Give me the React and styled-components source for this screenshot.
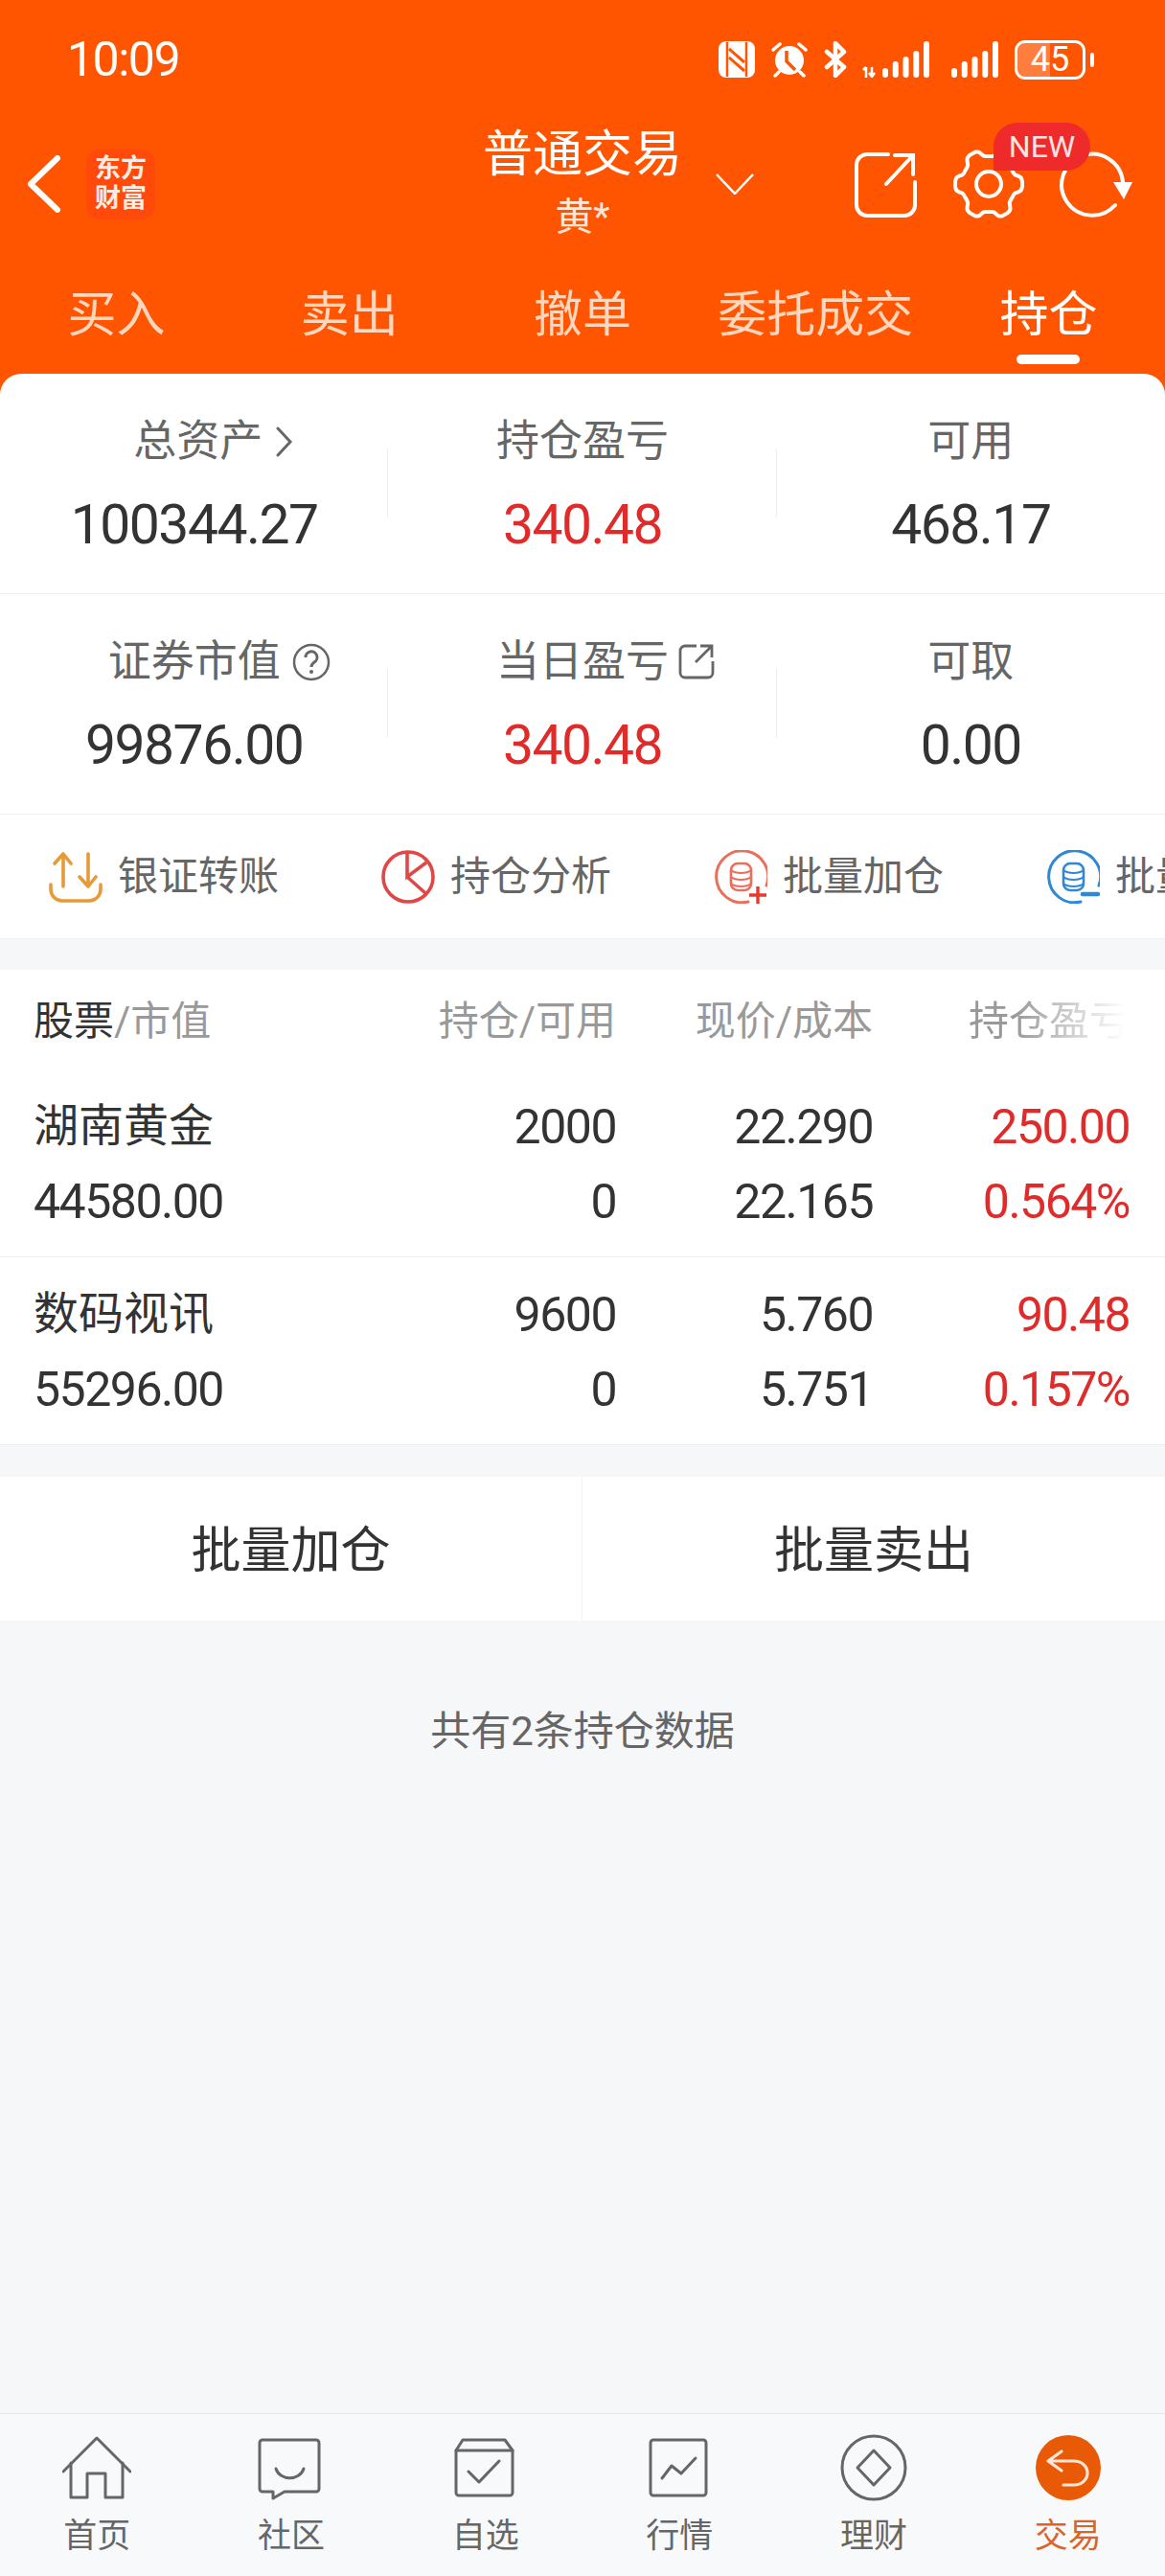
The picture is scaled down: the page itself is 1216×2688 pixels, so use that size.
import React from 'react'
import styled, { createGlobalStyle } from 'styled-components'

const GlobalStyle = createGlobalStyle`
  html, body {
    margin: 0;
    padding: 0;
    background: #F6F7F9;
  }
  * {
    box-sizing: border-box;
  }
  body {
    font-family: Roboto, "Noto Sans CJK SC", sans-serif;
  }
`

const ORANGE = '#FF5500'
const RED = '#E02B2B'

const Page = styled.div`
  width: 1216px;
  height: 2688px;
  display: flex;
  flex-direction: column;
  overflow: hidden;
  background: #F6F7F9;
`

const Header = styled.header`
  background: ${ORANGE};
  color: #fff;
`

const StatusBar = styled.div`
  height: 124px;
  padding: 0 74px 0 70px;
  display: flex;
  align-items: center;
  justify-content: space-between;
`

const Time = styled.span`
  font-size: 50px;
  letter-spacing: -1.5px;
`

const StatusIcons = styled.div`
  display: flex;
  align-items: center;
  gap: 16px;
`

const SimSlot = styled.div`
  display: flex;
  margin-left: 7px;
`

const Battery = styled.div`
  position: relative;
  width: 74px;
  height: 41px;
  margin-right: 9px;
  border: 3px solid #fff;
  border-radius: 11px;
  background: linear-gradient(to right, rgba(255, 255, 255, 0.24) 50%, transparent 50%);
  background-clip: padding-box;
  display: flex;
  align-items: center;
  justify-content: center;
  font-size: 36px;
  line-height: 1;
  &::after {
    content: '';
    position: absolute;
    right: -12px;
    top: 10px;
    width: 4px;
    height: 15px;
    border-radius: 2px;
    background: #fff;
  }
`

const Nav = styled.nav`
  position: relative;
  height: 136px;
  display: grid;
  grid-template-columns: 1fr auto 1fr;
  align-items: center;
`

const NavLeft = styled.div`
  display: flex;
  align-items: center;
  padding-left: 28px;
`

const Logo = styled.div`
  width: 72px;
  height: 73px;
  margin-left: 26px;
  border-radius: 14px;
  background: #FF4A0C;
  color: #FFEDE3;
  font-size: 27px;
  font-weight: 700;
  line-height: 31px;
  text-align: center;
  display: flex;
  flex-direction: column;
  justify-content: center;
`

const TitleBlock = styled.div`
  text-align: center;
`

const Title = styled.div`
  font-size: 52px;
  line-height: 60px;
`

const SubTitle = styled.div`
  margin-top: 10px;
  font-size: 40px;
  line-height: 50px;
  color: #FFE6D8;
`

const NavRight = styled.div`
  display: flex;
  align-items: center;
  padding: 0 32px 0 35px;
`

const Actions = styled.div`
  margin-left: auto;
  display: flex;
  align-items: center;
  gap: 34px;
`

const NewBadge = styled.span`
  position: absolute;
  right: 78px;
  top: 4px;
  width: 101px;
  height: 50px;
  border-radius: 25px 25px 25px 0;
  background: #EE2A2A;
  color: #FCE4E4;
  font-size: 32px;
  line-height: 50px;
  text-align: center;
`

const Tabs = styled.div`
  height: 130px;
  display: grid;
  grid-template-columns: repeat(5, 1fr);
`

const Tab = styled.div`
  position: relative;
  padding-top: 44px;
  text-align: center;
  font-size: 51px;
  line-height: 50px;
  color: ${p => (p.$active ? '#fff' : '#FFD6BE')};
  &::after {
    content: '';
    display: ${p => (p.$active ? 'block' : 'none')};
    position: absolute;
    left: 50%;
    bottom: 10px;
    width: 66px;
    height: 10px;
    margin-left: -33px;
    border-radius: 5px;
    background: #fff;
  }
`

const SummaryBack = styled.div`
  background: ${ORANGE};
`

const Summary = styled.section`
  background: #fff;
  border-radius: 22px 22px 0 0;
`

const SummaryRow = styled.div`
  height: 230px;
  display: grid;
  grid-template-columns: repeat(3, 1fr);
  border-bottom: 1px solid #EEEEEE;
`

const SummaryCell = styled.div`
  position: relative;
  padding-top: 41px;
  text-align: center;
  &:not(:last-child)::after {
    content: '';
    position: absolute;
    right: 0;
    top: 78px;
    width: 1px;
    height: 72px;
    background: #EEEEEE;
  }
`

const SummaryLabel = styled.div`
  position: relative;
  display: inline-block;
  margin-left: ${p => p.$shift || 0}px;
  font-size: 45px;
  line-height: 60px;
  color: #666;
`

const LabelIcon = styled.svg`
  position: absolute;
  left: 100%;
  top: ${p => p.$top || 10}px;
  margin-left: ${p => p.$gap || 10}px;
`

const SummaryValue = styled.div`
  margin-top: 22px;
  font-size: 57px;
  line-height: 70px;
  letter-spacing: -1.5px;
  color: ${p => (p.$red ? RED : '#333')};
`

const Toolbar = styled.div`
  height: 130px;
  padding-left: 51px;
  display: flex;
  align-items: center;
  overflow: hidden;
  background: #fff;
  border-bottom: 1px solid #F0F0F0;
`

const ToolItem = styled.div`
  flex: 0 0 347px;
  display: flex;
  align-items: center;
  gap: 16px;
  font-size: 42px;
  line-height: 60px;
  color: #666;
  white-space: nowrap;
`

const HoldingTable = styled.section`
  margin-top: 32px;
  padding: 0 37px 0 35px;
  background: #fff;
  border-bottom: 1px solid #EEEEEE;
`

const HeadRow = styled.div`
  height: 104px;
  padding-bottom: 6px;
  display: grid;
  grid-template-columns: 360px 248px 268px 268px;
  align-items: center;
  font-size: 42px;
  color: #999;
`

const HeadCell = styled.div`
  text-align: ${p => (p.$left ? 'left' : 'right')};
  white-space: nowrap;
  ${p => p.$fade && 'mask-image: linear-gradient(to right, #000 55%, transparent 98%);'}
  b {
    font-weight: 400;
    color: #333;
  }
`

const StockRow = styled.div`
  margin: 0 -37px 0 -35px;
  padding: 20px 37px 19px 35px;
  display: grid;
  grid-template-columns: 360px 248px 268px 268px;
  border-top: ${p => (p.$first ? 'none' : '1px solid #EEEEEE')};
`

const StockCol = styled.div`
  text-align: ${p => (p.$left ? 'left' : 'right')};
  color: ${p => (p.$red ? RED : '#333')};
`

const NameLine = styled.div`
  font-size: 47px;
  line-height: 78px;
`

const NumLine = styled.div`
  padding-top: 3px;
  font-size: 50px;
  line-height: 75px;
  letter-spacing: -1.5px;
`

const BatchBar = styled.div`
  margin-top: 33px;
  height: 150px;
  display: grid;
  grid-template-columns: 1fr 1fr;
  background: #fff;
`

const BatchButton = styled.div`
  padding-bottom: 5px;
  display: flex;
  align-items: center;
  justify-content: center;
  font-size: 52px;
  color: #333;
  &:first-child {
    border-right: 1px solid #F2F2F2;
  }
`

const Note = styled.div`
  padding-top: 86px;
  text-align: center;
  font-size: 42px;
  line-height: 60px;
  color: #666;
`

const Spacer = styled.div`
  flex: 1;
`

const TabBar = styled.footer`
  height: 170px;
  padding-top: 21px;
  display: grid;
  grid-template-columns: repeat(6, 1fr);
  background: #F8F9FB;
  border-top: 1px solid #E6E6E6;
`

const TabItem = styled.div`
  display: flex;
  flex-direction: column;
  align-items: center;
  font-size: 35px;
  line-height: 40px;
  color: ${p => (p.$active ? '#D9642C' : '#666')};
  span {
    margin-top: 15px;
  }
`

/* ---- status bar drawings ---- */

const NfcIcon = () => (
  <svg width="38" height="38" viewBox="0 0 38 38">
    <rect x="0" y="0" width="38" height="38" rx="8" fill="#fff" />
    <path d="M9 1v36M29 1v36" stroke={ORANGE} strokeWidth="2.5" fill="none" />
    <path d="M11 8l16 14M11 17l16 14" stroke={ORANGE} strokeWidth="3" fill="none" />
  </svg>
)

const AlarmIcon = () => (
  <svg width="40" height="38" viewBox="0 0 40 38">
    <circle cx="20" cy="20" r="15" fill="#fff" />
    <path d="M17 10v11l9 9" stroke={ORANGE} strokeWidth="3.5" fill="none" />
    <path d="M3 9l7-6M30 3l7 6M9 32l-4 4M31 32l4 4" stroke="#fff" strokeWidth="3.5" strokeLinecap="round" />
  </svg>
)

const BluetoothIcon = () => (
  <svg width="24" height="38" viewBox="0 0 24 38">
    <path
      d="M3 11l18 16-9 9V2l9 9L3 27"
      stroke="#fff"
      strokeWidth="4.5"
      strokeLinejoin="round"
      strokeLinecap="round"
      fill="none"
    />
  </svg>
)

const barHeights = [10, 17, 22, 28, 38]

const SignalIcon = ({ offset, width, marker }) => (
  <svg width={width} height="38" viewBox={`0 0 ${width} 38`}>
    {marker && <path d="M4 27v11M1 30l3-3M10 27v9M7 33l3 4 3-4" stroke="#fff" strokeWidth="2.5" fill="none" />}
    {barHeights.map((h, i) => (
      <rect key={i} x={offset + i * 10.75} y={38 - h} width="6" height={h} rx="3" fill="#fff" />
    ))}
  </svg>
)

/* ---- nav drawings ---- */

const BackIcon = () => (
  <svg width="36" height="60" viewBox="0 0 36 60">
    <path d="M32 3L4 30l28 27" stroke="#fff" strokeWidth="6" strokeLinecap="round" strokeLinejoin="round" fill="none" />
  </svg>
)

const ChevronDown = () => (
  <svg width="40" height="22" viewBox="0 0 40 22">
    <path d="M1 1l19 20L39 1" stroke="#fff" strokeWidth="2.5" fill="none" />
  </svg>
)

const ShareIcon = () => (
  <svg width="68" height="70" viewBox="0 0 68 70">
    <path
      d="M35 4H13a11 11 0 0 0-11 11v42a11 11 0 0 0 11 11h39a11 11 0 0 0 11-11V33"
      stroke="#fff"
      strokeWidth="4"
      strokeLinecap="round"
      fill="none"
    />
    <path d="M33 35L61 5M42 5h19v20" stroke="#fff" strokeWidth="4" strokeLinecap="round" fill="none" />
  </svg>
)

// outline of the cog, six flat lobes
const gearPath = () => {
  const pts = []
  for (let i = 0; i < 180; i++) {
    const a = (i / 180) * Math.PI * 2
    const r = 31.5 + 3.6 * Math.tanh(2.2 * Math.cos(6 * a))
    pts.push(`${(38 + r * Math.cos(a)).toFixed(1)} ${(36 + r * Math.sin(a) * 1.04).toFixed(1)}`)
  }
  return `M${pts.join('L')}Z`
}

const GearIcon = () => (
  <svg width="76" height="72" viewBox="0 0 76 72">
    <path d={gearPath()} stroke="#fff" strokeWidth="4" strokeLinejoin="round" fill="none" />
    <circle cx="38" cy="36" r="13" stroke="#fff" strokeWidth="4" fill="none" />
  </svg>
)

const RefreshIcon = () => (
  <svg width="80" height="72" viewBox="0 0 80 72">
    <path d="M60 58A32 32 0 1 1 68 34" stroke="#fff" strokeWidth="4" strokeLinecap="round" fill="none" />
    <path d="M58 34h20l-9 18z" fill="#fff" />
  </svg>
)

/* ---- summary label icons ---- */

const ChevronRight = () => (
  <LabelIcon width="18" height="32" viewBox="0 0 18 32" $gap={14} $top={14}>
    <path d="M2 2l13 14L2 30" stroke="#666" strokeWidth="3" strokeLinecap="round" fill="none" />
  </LabelIcon>
)

const HelpIcon = () => (
  <LabelIcon width="40" height="40" viewBox="0 0 40 40" $gap={12}>
    <circle cx="20" cy="20" r="18" stroke="#666" strokeWidth="2.5" fill="none" />
    <path d="M14 15a6 6 0 1 1 9 5c-2 1.5-3 2.5-3 5" stroke="#666" strokeWidth="3" fill="none" />
    <circle cx="20" cy="30" r="2" fill="#666" />
  </LabelIcon>
)

const LinkOutIcon = () => (
  <LabelIcon width="38" height="38" viewBox="0 0 38 38" $gap={10}>
    <path d="M19 3H7a5 5 0 0 0-5 5v23a5 5 0 0 0 5 5h24a5 5 0 0 0 5-5V19" stroke="#666" strokeWidth="2.8" fill="none" />
    <path d="M18 20L35 3M23 3h12v12" stroke="#666" strokeWidth="2.8" fill="none" />
  </LabelIcon>
)

/* ---- toolbar drawings ---- */

const TransferIcon = () => (
  <svg width="56" height="56" viewBox="0 0 56 56">
    <path
      d="M15 38V4M6 14l9-10 8 10M41 4v34M32 28l9 10 8-10M2 36v5a12 12 0 0 0 12 12h28a12 12 0 0 0 12-12v-5"
      stroke="#E69B38"
      strokeWidth="3.6"
      strokeLinecap="round"
      strokeLinejoin="round"
      fill="none"
    />
  </svg>
)

const PieIcon = () => (
  <svg width="56" height="56" viewBox="0 0 56 56">
    <circle cx="28" cy="28" r="26" stroke="#E04848" strokeWidth="3.6" fill="none" />
    <path d="M27 3v25l20-15M27 28l19 17" stroke="#E04848" strokeWidth="3.6" fill="none" />
  </svg>
)

const DbIcon = ({ color, accent, plus }) => (
  <svg width="56" height="56" viewBox="0 0 56 56">
    <path d="M55 37A27 27 0 1 0 36 54" stroke={color} strokeWidth="3" strokeLinecap="round" fill="none" />
    <rect x="18" y="14" width="21" height="28" rx="7" stroke={color} strokeWidth="2.6" fill="none" />
    <path d="M18 21c5 4 16 4 21 0M18 28c5 4 16 4 21 0M18 35c5 4 16 4 21 0" stroke={color} strokeWidth="2.2" fill="none" />
    {plus ? (
      <path d="M37 47h18M46 38v18" stroke={accent} strokeWidth="3.4" />
    ) : (
      <path d="M38 46h16" stroke={accent} strokeWidth="4.5" strokeLinecap="round" />
    )}
  </svg>
)

/* ---- tab bar drawings ---- */

const TabIcon = ({ children }) => (
  <svg width="72" height="72" viewBox="0 0 72 72" fill="none" stroke="#666" strokeWidth="3" strokeLinejoin="round" strokeLinecap="round">
    {children}
  </svg>
)

const tabs = [
  {
    label: '首页',
    icon: (
      <TabIcon>
        <path d="M1 39L36 4l35 35" />
        <path d="M9 30v36h17V41h19v25h18V30" />
      </TabIcon>
    ),
  },
  {
    label: '社区',
    icon: (
      <TabIcon>
        <path d="M6 6h56a3 3 0 0 1 3 3v48a3 3 0 0 1-3 3H29L17 67v-7H6a3 3 0 0 1-3-3V9a3 3 0 0 1 3-3z" />
        <path d="M20 36c4 13 25 13 29 0" />
      </TabIcon>
    ),
  },
  {
    label: '自选',
    icon: (
      <TabIcon>
        <path d="M5 17l7-11h44l8 11v44a3 3 0 0 1-3 3H8a3 3 0 0 1-3-3z" />
        <path d="M5 17h59" />
        <path d="M18 39l11 11 21-22" />
      </TabIcon>
    ),
  },
  {
    label: '行情',
    icon: (
      <TabIcon>
        <rect x="6" y="6" width="58" height="58" rx="3" />
        <path d="M18 46l10-13 10 8 15-16" />
      </TabIcon>
    ),
  },
  {
    label: '理财',
    icon: (
      <TabIcon>
        <circle cx="36" cy="35" r="33" />
        <path d="M36 17l17 18-17 18-17-18z" />
      </TabIcon>
    ),
  },
  {
    label: '交易',
    active: true,
    icon: (
      <svg width="72" height="72" viewBox="0 0 72 72" fill="none">
        <circle cx="36" cy="35" r="34" fill="#E85A05" />
        <path
          d="M29 18L15 28l14 10M15 28h27c8 0 14 5.500 14 12.500S50 53 42 53H31"
          stroke="#FFE6D6"
          strokeWidth="3.2"
          strokeLinecap="round"
          strokeLinejoin="round"
        />
      </svg>
    ),
  },
]

const holdings = [
  { name: '湖南黄金', value: '44580.00', qty: '2000', free: '0', price: '22.290', cost: '22.165', pnl: '250.00', pct: '0.564%' },
  { name: '数码视讯', value: '55296.00', qty: '9600', free: '0', price: '5.760', cost: '5.751', pnl: '90.48', pct: '0.157%' },
]

function App() {
  return (
    <Page>
      <GlobalStyle />
      <Header>
        <StatusBar>
          <Time>10:09</Time>
          <StatusIcons>
            <NfcIcon />
            <AlarmIcon />
            <BluetoothIcon />
            <SignalIcon width={70} offset={21} marker />
            <SimSlot>
              <SignalIcon width={50} offset={0} />
            </SimSlot>
            <Battery>45</Battery>
          </StatusIcons>
        </StatusBar>
        <Nav>
          <NavLeft>
            <BackIcon />
            <Logo>
              <div>东方</div>
              <div>财富</div>
            </Logo>
          </NavLeft>
          <TitleBlock>
            <Title>普通交易</Title>
            <SubTitle>黄*</SubTitle>
          </TitleBlock>
          <NavRight>
            <ChevronDown />
            <Actions>
              <ShareIcon />
              <GearIcon />
              <RefreshIcon />
            </Actions>
          </NavRight>
          <NewBadge>NEW</NewBadge>
        </Nav>
        <Tabs>
          <Tab>买入</Tab>
          <Tab>卖出</Tab>
          <Tab>撤单</Tab>
          <Tab>委托成交</Tab>
          <Tab $active>持仓</Tab>
        </Tabs>
      </Header>

      <SummaryBack>
        <Summary>
          <SummaryRow>
            <SummaryCell>
              <SummaryLabel $shift={8}>总资产<ChevronRight /></SummaryLabel>
              <SummaryValue>100344.27</SummaryValue>
            </SummaryCell>
            <SummaryCell>
              <SummaryLabel>持仓盈亏</SummaryLabel>
              <SummaryValue $red>340.48</SummaryValue>
            </SummaryCell>
            <SummaryCell>
              <SummaryLabel>可用</SummaryLabel>
              <SummaryValue>468.17</SummaryValue>
            </SummaryCell>
          </SummaryRow>
          <SummaryRow>
            <SummaryCell>
              <SummaryLabel>证券市值<HelpIcon /></SummaryLabel>
              <SummaryValue>99876.00</SummaryValue>
            </SummaryCell>
            <SummaryCell>
              <SummaryLabel>当日盈亏<LinkOutIcon /></SummaryLabel>
              <SummaryValue $red>340.48</SummaryValue>
            </SummaryCell>
            <SummaryCell>
              <SummaryLabel>可取</SummaryLabel>
              <SummaryValue>0.00</SummaryValue>
            </SummaryCell>
          </SummaryRow>
        </Summary>
      </SummaryBack>

      <Toolbar>
        <ToolItem><TransferIcon />银证转账</ToolItem>
        <ToolItem><PieIcon />持仓分析</ToolItem>
        <ToolItem><DbIcon color="#E8705C" accent="#E8392B" plus />批量加仓</ToolItem>
        <ToolItem><DbIcon color="#2E88D8" accent="#2E88D8" />批量卖出</ToolItem>
      </Toolbar>

      <HoldingTable>
        <HeadRow>
          <HeadCell $left><b>股票</b>/市值</HeadCell>
          <HeadCell>持仓/可用</HeadCell>
          <HeadCell>现价/成本</HeadCell>
          <HeadCell $fade>持仓盈亏</HeadCell>
        </HeadRow>
        {holdings.map((h, i) => (
          <StockRow key={h.name} $first={i === 0}>
            <StockCol $left>
              <NameLine>{h.name}</NameLine>
              <NumLine>{h.value}</NumLine>
            </StockCol>
            <StockCol>
              <NumLine>{h.qty}</NumLine>
              <NumLine>{h.free}</NumLine>
            </StockCol>
            <StockCol>
              <NumLine>{h.price}</NumLine>
              <NumLine>{h.cost}</NumLine>
            </StockCol>
            <StockCol $red>
              <NumLine>{h.pnl}</NumLine>
              <NumLine>{h.pct}</NumLine>
            </StockCol>
          </StockRow>
        ))}
      </HoldingTable>

      <BatchBar>
        <BatchButton>批量加仓</BatchButton>
        <BatchButton>批量卖出</BatchButton>
      </BatchBar>

      <Note>共有2条持仓数据</Note>
      <Spacer />

      <TabBar>
        {tabs.map(t => (
          <TabItem key={t.label} $active={t.active}>
            {t.icon}
            <span>{t.label}</span>
          </TabItem>
        ))}
      </TabBar>
    </Page>
  )
}

export default App
